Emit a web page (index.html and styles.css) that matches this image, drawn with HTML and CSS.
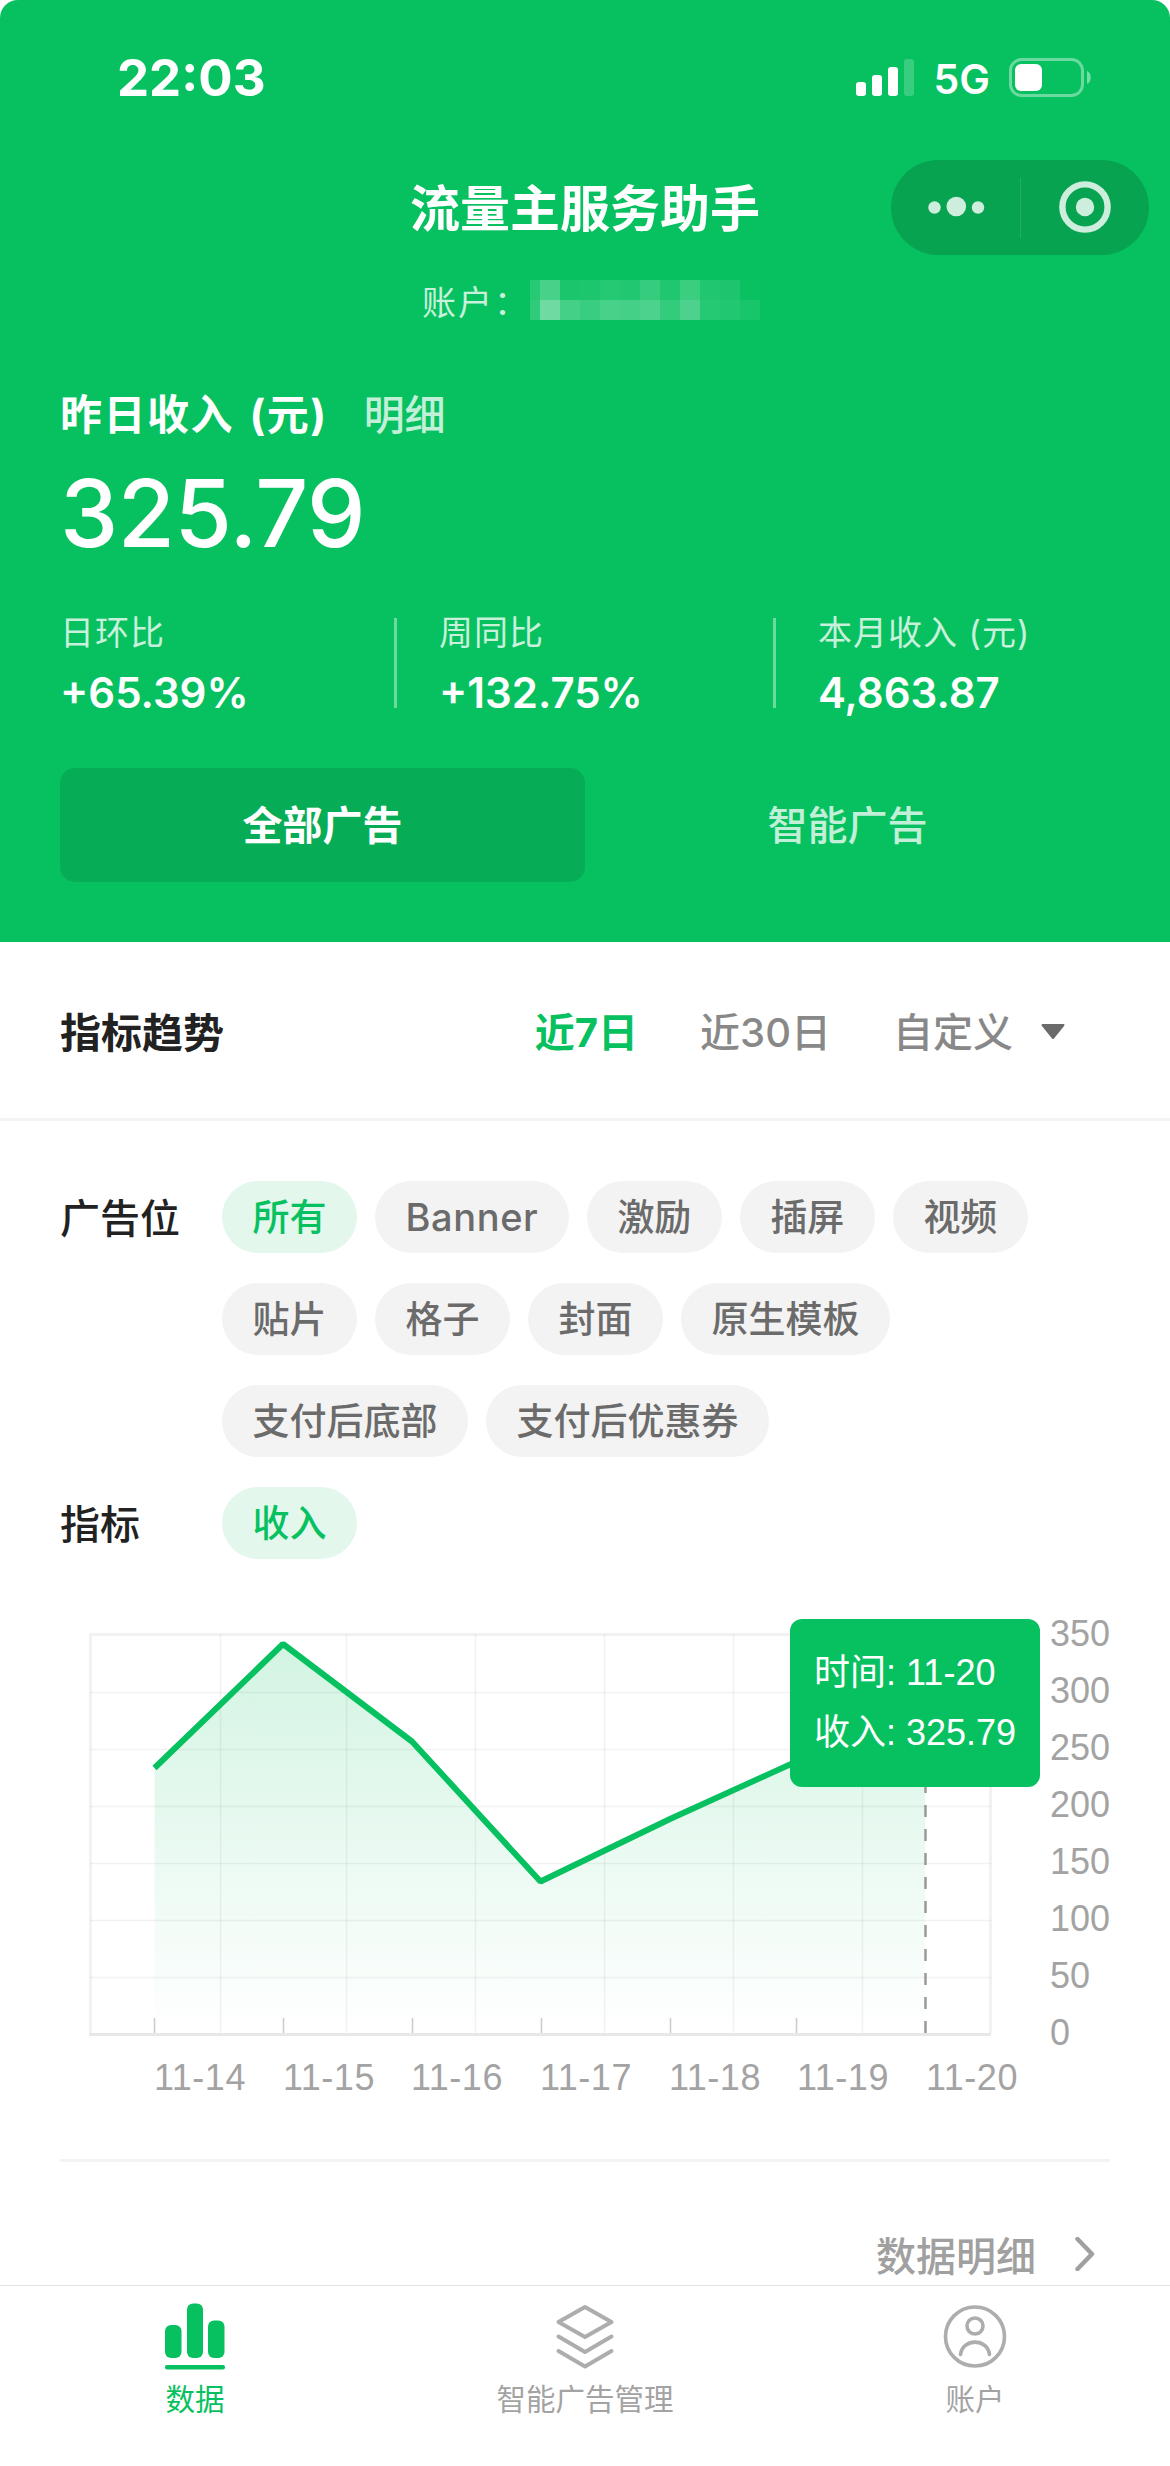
FILE: index.html
```html
<!DOCTYPE html>
<html lang="zh-CN">

<head>
  <meta charset="UTF-8">
  <title>流量主服务助手</title>
  <link rel="stylesheet" href="styles.css">
</head>

<body>

  <header class="header">
    <div class="status">
      <span class="time">22:03</span>
      <div class="status-icons">
        <svg class="signal" width="58" height="38" viewBox="0 0 58 38" fill="#fff">
          <rect x="0" y="23" width="10" height="14" rx="3" />
          <rect x="16" y="16" width="10" height="21" rx="3" />
          <rect x="32" y="8" width="10" height="29" rx="3" />
          <rect x="48" y="0" width="10" height="37" rx="3" opacity=".2" />
        </svg>
        <span class="network">5G</span>
        <svg class="battery" width="83" height="39" viewBox="0 0 83 39">
          <rect x="1.5" y="1.5" width="72" height="36" rx="11" fill="none" stroke="#fff" stroke-width="3" opacity=".4" />
          <rect x="6" y="6" width="27" height="27" rx="6" fill="#fff" />
          <path d="M78 13c5 2 5 11 0 13z" fill="#fff" opacity=".45" />
        </svg>
      </div>
    </div>

    <div class="nav">
      <h1>流量主服务助手</h1>
      <div class="capsule">
        <svg width="258" height="95" viewBox="0 0 258 95">
          <g fill="#cdeedd">
            <circle cx="43.5" cy="47.5" r="6.2" />
            <circle cx="65.3" cy="46.5" r="9.8" />
            <circle cx="87" cy="47.5" r="6.2" />
            <circle cx="194" cy="47" r="9.2" />
          </g>
          <circle cx="194" cy="47" r="22.6" fill="none" stroke="#cdeedd" stroke-width="6.4" />
          <path d="M129.5 18v60" stroke="#25ae62" />
        </svg>
      </div>
    </div>

    <div class="account">
      <span>账户：</span>
      <svg class="mosaic" width="230" height="40" viewBox="0 0 230 40" fill="#fff" shape-rendering="crispEdges">
        <rect x="0" width="10" height="20" opacity=".13" />
        <rect x="10" width="20" height="20" opacity=".26" />
        <rect x="30" width="20" height="20" opacity=".08" />
        <rect x="50" width="20" height="20" opacity=".09" />
        <rect x="70" width="20" height="20" opacity=".12" />
        <rect x="90" width="20" height="20" opacity=".11" />
        <rect x="110" width="20" height="20" opacity=".19" />
        <rect x="130" width="20" height="20" opacity=".1" />
        <rect x="150" width="20" height="20" opacity=".21" />
        <rect x="170" width="20" height="20" opacity=".1" />
        <rect x="190" width="20" height="20" opacity=".09" />
        <rect x="210" width="20" height="20" opacity=".01" />
        <rect x="0" y="20" width="10" height="20" opacity=".17" />
        <rect x="10" y="20" width="20" height="20" opacity=".42" />
        <rect x="30" y="20" width="20" height="20" opacity=".25" />
        <rect x="50" y="20" width="20" height="20" opacity=".2" />
        <rect x="70" y="20" width="20" height="20" opacity=".26" />
        <rect x="90" y="20" width="20" height="20" opacity=".25" />
        <rect x="110" y="20" width="20" height="20" opacity=".28" />
        <rect x="130" y="20" width="20" height="20" opacity=".18" />
        <rect x="150" y="20" width="20" height="20" opacity=".28" />
        <rect x="170" y="20" width="20" height="20" opacity=".12" />
        <rect x="190" y="20" width="20" height="20" opacity=".11" />
        <rect x="210" y="20" width="20" height="20" opacity=".07" />
      </svg>
    </div>

    <div class="income-title">
      <h2>昨日收入 (元)</h2>
      <a class="income-link">明细</a>
    </div>
    <div class="income">325.79</div>

    <div class="stats">
      <div class="stat">
        <p class="stat-label">日环比</p>
        <p class="stat-value">+65.39%</p>
      </div>
      <div class="stat">
        <p class="stat-label">周同比</p>
        <p class="stat-value">+132.75%</p>
      </div>
      <div class="stat">
        <p class="stat-label">本月收入 (元)</p>
        <p class="stat-value">4,863.87</p>
      </div>
    </div>

    <div class="ad-tabs">
      <div class="ad-tab active">全部广告</div>
      <div class="ad-tab">智能广告</div>
    </div>
  </header>

  <main>
    <div class="trend">
      <h3>指标趋势</h3>
      <div class="ranges">
        <span class="range active">近7日</span>
        <span class="range">近30日</span>
        <span class="range">自定义</span>
        <svg class="arrow" width="24" height="16" viewBox="0 0 24 16">
          <path d="M1.5 1h21L12 14z" fill="#6b6b6b" stroke="#6b6b6b" stroke-width="2" stroke-linejoin="round" />
        </svg>
      </div>
    </div>

    <div class="filters">
      <div class="filter">
        <span class="filter-name">广告位</span>
        <div class="tags">
          <span class="tag active">所有</span>
          <span class="tag tag-en">Banner</span>
          <span class="tag">激励</span>
          <span class="tag">插屏</span>
          <span class="tag">视频</span>
          <span class="tag">贴片</span>
          <span class="tag">格子</span>
          <span class="tag">封面</span>
          <span class="tag">原生模板</span>
          <span class="tag">支付后底部</span>
          <span class="tag">支付后优惠券</span>
        </div>
      </div>
      <div class="filter">
        <span class="filter-name">指标</span>
        <div class="tags">
          <span class="tag active">收入</span>
        </div>
      </div>
    </div>

    <div class="chart">
      <svg width="1170" height="510" viewBox="0 0 1170 510">
        <defs>
          <linearGradient id="area" x1="0" y1="43" x2="0" y2="433" gradientUnits="userSpaceOnUse">
            <stop offset="0" stop-color="#07c160" stop-opacity=".18" />
            <stop offset="1" stop-color="#07c160" stop-opacity="0" />
          </linearGradient>
        </defs>

        <path d="M154.5 168L283 44L412 141.5L540.5 281.5L670 219L796.5 161.5L925 62V433H154.5z" fill="url(#area)" />

        <!-- grid -->
        <g fill="none" stroke="#000" stroke-opacity=".05" stroke-width="1.5">
          <path d="M90 92.5h901M90 149.5h901M90 206.5h901M90 263.5h901M90 320.5h901M90 377.5h901" />
          <path d="M220.5 34v399M346.5 34v399M475.5 34v399M604.5 34v399M733.5 34v399M862.5 34v399" />
          <path d="M90.5 34v399M990.5 34v399M89 34.5h902" stroke-width="3" />
        </g>
        <path d="M89 434.5h902" stroke="#e8e8e8" stroke-width="3" />
        <path d="M154.5 418v15M283.5 418v15M412.5 418v15M541.5 418v15M670.5 418v15M796.5 418v15" stroke="#ccc" stroke-width="1.5" />

        <path class="line" d="M154.5 168L283 44L412 141.5L540.5 281.5L670 219L796.5 161.5L925 62" />
        <path d="M925.5 433V62" stroke="#999" stroke-width="2.5" stroke-dasharray="12 12" />

        <g class="axis">
          <text x="1050" y="46">350</text>
          <text x="1050" y="103">300</text>
          <text x="1050" y="160">250</text>
          <text x="1050" y="217">200</text>
          <text x="1050" y="274">150</text>
          <text x="1050" y="331">100</text>
          <text x="1050" y="388">50</text>
          <text x="1050" y="445">0</text>
        </g>
        <g class="axis axis-x">
          <text x="154" y="490">11-14</text>
          <text x="283" y="490">11-15</text>
          <text x="411" y="490">11-16</text>
          <text x="540" y="490">11-17</text>
          <text x="669" y="490">11-18</text>
          <text x="797" y="490">11-19</text>
          <text x="926" y="490">11-20</text>
        </g>
      </svg>
      <div class="tooltip">
        <p>时间: <span>11-20</span></p>
        <p>收入: <span>325.79</span></p>
      </div>
    </div>

    <div class="detail">
      <span>数据明细</span>
      <svg width="20" height="34" viewBox="0 0 20 34">
        <path d="M2.5 2L17 17L2.5 32" fill="none" stroke="#a0a0a0" stroke-width="4.5" stroke-linejoin="round" stroke-linecap="round" />
      </svg>
    </div>
  </main>

  <nav class="tabbar">
    <div class="tab active">
      <svg width="72" height="72" viewBox="0 0 72 72" fill="#07c160">
        <rect x="6" y="25" width="16.5" height="33" rx="6" />
        <rect x="28" y="3.5" width="16" height="54.5" rx="6" />
        <rect x="49" y="20.5" width="16.5" height="37.5" rx="6" />
        <rect x="6" y="65" width="60" height="4.5" rx="2" />
      </svg>
      <span>数据</span>
    </div>
    <div class="tab">
      <svg width="72" height="72" viewBox="0 0 72 72" fill="none" stroke="#adadad" stroke-width="4" stroke-linejoin="round" stroke-linecap="round">
        <path d="M36 7L62.5 22L36 37L9.5 22z" />
        <path d="M9.5 36.5L36 52L62.5 36.5" />
        <path d="M9.5 51L36 66.5L62.5 51" />
      </svg>
      <span>智能广告管理</span>
    </div>
    <div class="tab">
      <svg width="72" height="72" viewBox="0 0 72 72" fill="none" stroke="#adadad" stroke-width="3.6">
        <circle cx="36" cy="36.5" r="29.5" />
        <circle cx="36" cy="26" r="8" />
        <path d="M21.5 54.5C23.5 38 48.500 38 50.5 54.5" stroke-linecap="round" />
      </svg>
      <span>账户</span>
    </div>
  </nav>

</body>

</html>
```

FILE: styles.css
```css
body {
  margin: 0;
  width: 1170px;
  height: 2466px;
  display: flex;
  flex-direction: column;
  overflow: hidden;
  background-color: #fff;
  color: #222;
  font-family: Inter, "Noto Sans CJK SC", sans-serif;
}

h1, h2, h3, p {
  margin: 0;
}

svg {
  display: block;
  flex: none;
}

/* header */

.header {
  box-sizing: border-box;
  height: 942px;
  flex: none;
  padding: 0 60px;
  background-color: #07c160;
  color: #fff;
  border-radius: 18px 18px 0 0;
}

.status {
  height: 155px;
  display: flex;
  align-items: center;
  justify-content: space-between;
  padding: 0 18px 0 57px;
}

.time {
  font-size: 51px;
  font-weight: 700;
}

.status-icons {
  display: flex;
  align-items: center;
}

.network {
  margin: 3px 19px 0 20px;
  font-size: 41px;
  font-weight: 600;
}

.nav {
  height: 104px;
  display: grid;
  grid-template-columns: 1fr auto 1fr;
  align-items: center;
  margin: 0 -39px;
}

.nav h1 {
  grid-column: 2;
  padding-top: 3px;
  font-size: 50px;
  line-height: 60px;
  font-weight: 700;
  white-space: nowrap;
}

.capsule {
  grid-column: 3;
  justify-self: end;
  width: 258px;
  height: 95px;
  border-radius: 48px;
  background-color: #07a350;
}

.account {
  height: 82px;
  display: flex;
  align-items: center;
  padding-left: 362px;
  font-size: 34px;
  letter-spacing: 2px;
  color: rgba(255, 255, 255, .78);
}

.income-title {
  display: flex;
  margin-top: 44px;
  line-height: 60px;
}

.income-title h2 {
  font-size: 42px;
  font-weight: 700;
  letter-spacing: 1.5px;
  word-spacing: 4px;
}

.income-link {
  margin-left: 36px;
  font-size: 41px;
  font-weight: 500;
  color: rgba(255, 255, 255, .75);
}

.income {
  margin-top: 18px;
  font-size: 93px;
  line-height: 100px;
  font-weight: 500;
  letter-spacing: -.5px;
}

.stats {
  display: grid;
  grid-template-columns: 337px 337px 1fr;
  gap: 42px;
  margin-top: 55px;
}

.stat {
  border-right: 3px solid rgba(255, 255, 255, .4);
  line-height: 30px;
  white-space: nowrap;
}

.stat:last-child {
  border-right: none;
}

.stat-label {
  margin-bottom: 30px;
  font-size: 34px;
  letter-spacing: 1px;
  color: rgba(255, 255, 255, .78);
}

.stat-value {
  font-size: 42px;
  font-weight: 600;
}

.ad-tabs {
  display: grid;
  grid-template-columns: 1fr 1fr;
  margin-top: 60px;
}

.ad-tab {
  height: 114px;
  line-height: 116px;
  border-radius: 15px;
  text-align: center;
  font-size: 40px;
  font-weight: 500;
  color: rgba(255, 255, 255, .75);
}

.ad-tab.active {
  background-color: #07ad56;
  font-weight: 700;
  color: #fff;
}

/* trend */

.trend {
  display: flex;
  justify-content: space-between;
  align-items: center;
  height: 176px;
  padding: 0 105px 0 60px;
  border-bottom: 3px solid #f3f3f3;
}

.trend h3 {
  font-size: 41px;
  font-weight: 700;
}

.ranges {
  display: flex;
  align-items: center;
}

.range {
  margin-left: 62px;
  font-size: 40px;
  font-weight: 500;
  color: #888;
}

.range.active {
  color: #07c160;
  font-weight: 700;
}

.arrow {
  margin: 4px 0 0 28px;
}

.filters {
  display: flex;
  flex-direction: column;
  gap: 30px;
  padding: 60px 60px 0;
}

.filter {
  display: flex;
}

.filter-name {
  width: 162px;
  height: 72px;
  line-height: 75px;
  font-size: 40px;
  font-weight: 500;
}

.tags {
  flex: 1;
  display: flex;
  flex-wrap: wrap;
  gap: 30px 18px;
}

.tag {
  height: 72px;
  line-height: 73px;
  padding: 0 30.5px;
  border-radius: 36px;
  background-color: #f3f3f3;
  color: #6b6b6b;
  font-size: 37px;
  font-weight: 500;
}

.tag-en {
  font-size: 38px;
  letter-spacing: .6px;
}

.tag.active {
  background-color: #e3f7ed;
  color: #07c160;
}

/* chart */

.chart {
  position: relative;
  margin-top: 41px;
  font-family: "Liberation Sans", "Noto Sans CJK SC", sans-serif;
}

.axis {
  font-size: 36px;
  fill: #a3a3a3;
}

.axis-x {
  letter-spacing: .5px;
}

.line {
  fill: none;
  stroke: #07c160;
  stroke-width: 6;
  stroke-linejoin: bevel;
}

.tooltip {
  box-sizing: border-box;
  position: absolute;
  left: 790px;
  top: 19px;
  width: 250px;
  height: 168px;
  padding: 24px 0 0 24px;
  border-radius: 12px;
  background-color: #07c160;
  color: #fff;
  font-size: 36px;
  line-height: 60px;
  white-space: nowrap;
}

.detail {
  display: flex;
  justify-content: flex-end;
  align-items: center;
  margin: 49px 60px 0;
  height: 183px;
  padding-right: 15px;
  border-top: 3px solid #f3f3f3;
  color: #a0a0a0;
  font-size: 40px;
  font-weight: 500;
}

.detail span {
  margin-right: 39px;
}

/* tab bar */

.tabbar {
  box-sizing: border-box;
  position: absolute;
  top: 2285px;
  left: 0;
  width: 1170px;
  height: 181px;
  display: grid;
  grid-template-columns: repeat(3, 1fr);
  border-top: 1px solid #e3e3e3;
  background-color: #fff;
}

.tab {
  display: flex;
  flex-direction: column;
  align-items: center;
  padding-top: 14px;
  font-size: 29.5px;
  line-height: 54px;
  color: #a3a3a3;
}

.tab.active {
  color: #07c160;
}
```
